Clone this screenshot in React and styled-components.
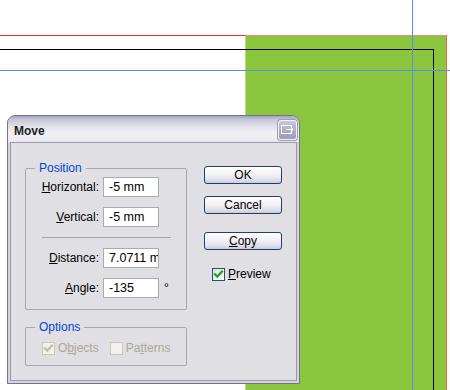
import React from "react";
import styled, { createGlobalStyle } from "styled-components";

const Global = createGlobalStyle`
  html, body { margin: 0; padding: 0; background: #ffffff; }
  body { width: 450px; height: 390px; overflow: hidden; font-family: "Liberation Sans", Arial, sans-serif; }
  * { box-sizing: border-box; }
`;

const Stage = styled.div`
  position: relative;
  width: 450px;
  height: 390px;
  overflow: hidden;
  background: #ffffff;
`;

const Artwork = styled.svg`
  display: block;
`;

const Window = styled.div`
  position: absolute;
  left: 7px;
  top: 115px;
  width: 293px;
  height: 269px;
  border: 1px solid #73738c;
  border-radius: 8px 8px 0 0;
  background: #d4d4e0;
  display: flex;
  flex-direction: column;
  font-family: "Liberation Sans", Arial, sans-serif;
  font-size: 12px;
  color: #000;
`;

const TitleBar = styled.div`
  height: 26px;
  flex: none;
  display: flex;
  align-items: center;
  justify-content: space-between;
  padding: 0 2px 0 6px;
  border-radius: 7px 7px 0 0;
  background: linear-gradient(
    to bottom,
    #a3a3ba 0%,
    #c6c6d6 14%,
    #e2e2eb 40%,
    #f1f1f5 70%,
    #e7e7ee 100%
  );
`;

const Title = styled.span`
  font-weight: bold;
  font-size: 12px;
  color: #1e1e1e;
  padding-top: 3px;
`;

const CloseButton = styled.div`
  width: 19px;
  height: 20px;
  margin-top: 2px;
  border-radius: 3px;
  border: 1px solid #f2f2f7;
  box-shadow: 0 0 0 1px #9c9cb3;
  background: linear-gradient(to bottom, #c9c9dc 0%, #acacc6 55%, #9d9db8 100%);
  display: flex;
  align-items: center;
  justify-content: center;
`;

const Body = styled.div`
  flex: 1;
  margin: 0 2px 2px 2px;
  border: 1px solid #9a9aaf;
  background: #e0dfe3;
  display: flex;
  align-items: flex-start;
  padding: 23px 0 0 14px;
  gap: 17px;
`;

const LeftColumn = styled.div`
  width: 162px;
  margin-top: 2px;
  display: flex;
  flex-direction: column;
  gap: 17px;
`;

const GroupBox = styled.div`
  position: relative;
  border: 1px solid #a9a8ad;
  border-radius: 2px;
  padding: ${(p) => p.$pad};
  display: flex;
  flex-direction: ${(p) => (p.$row ? "row" : "column")};
  gap: ${(p) => p.$gap || "10px"};
`;

const Legend = styled.span`
  position: absolute;
  top: -9px;
  left: 9px;
  padding: 0 4px;
  background: #e0dfe3;
  color: #0046d5;
  font-size: 12px;
  line-height: 16px;
`;

const FieldRow = styled.div`
  display: flex;
  align-items: center;
  height: 20px;
`;

const Label = styled.span`
  width: 73px;
  text-align: right;
  margin-right: 4px;
  white-space: nowrap;
`;

const Field = styled.div`
  width: 56px;
  height: 20px;
  border: 1px solid #a5acb2;
  background: #ffffff;
  padding: 0 0 0 5px;
  line-height: 18px;
  font-size: 12.5px;
  white-space: nowrap;
  overflow: hidden;
`;

const Unit = styled.span`
  margin-left: 5px;
  align-self: flex-start;
  padding-top: 3px;
  line-height: 14px;
`;

const Separator = styled.div`
  height: 1px;
  margin: 0 15px 0 16px;
  background: #a6a5aa;
`;

const Key = styled.span`
  text-decoration: underline;
  text-underline-offset: 1px;
`;

const CheckItem = styled.label`
  display: flex;
  align-items: center;
  gap: 3px;
  color: ${(p) => (p.$disabled ? "#aca899" : "#000")};
  white-space: nowrap;
`;

const Box = styled.span`
  width: 13px;
  height: 13px;
  flex: none;
  border: 1px solid ${(p) => (p.$disabled ? "#cac8bb" : "#1c5180")};
  background: ${(p) => (p.$disabled ? "#f2f1ea" : "linear-gradient(135deg, #dcdcd7, #ffffff)")};
  display: flex;
  align-items: center;
  justify-content: center;
`;

const RightColumn = styled.div`
  width: 78px;
  display: flex;
  flex-direction: column;
`;

const Button = styled.div`
  height: 18px;
  margin-top: ${(p) => p.$mt || "0px"};
  border: 1px solid #1f3f6d;
  border-radius: 3px;
  background: linear-gradient(to bottom, #ffffff 0%, #f3f3f7 45%, #dcdce6 85%, #cacad8 100%);
  display: flex;
  align-items: center;
  justify-content: center;
  line-height: 16px;
`;

const PreviewRow = styled.div`
  margin: 17px 0 0 8px;
`;

const Check = ({ color }) => (
  <svg width="11" height="11" viewBox="0 0 11 11">
    <path d="M2 5.2 L4.3 7.6 L9 2.6" fill="none" stroke={color} strokeWidth="2.2" strokeLinecap="square" />
  </svg>
);

const PaletteIcon = () => (
  <svg width="13" height="10" viewBox="0 0 13 10">
    <rect x="0.5" y="0.5" width="10" height="8" fill="none" stroke="#ffffff" strokeWidth="1" />
    <path d="M5 4.5 H12" stroke="#ffffff" strokeWidth="1" />
    <path d="M10 2.5 L12 4.5 L10 6.5" fill="none" stroke="#ffffff" strokeWidth="1" />
  </svg>
);

const Canvas = () => (
  <Artwork width="450" height="390" viewBox="0 0 450 390">
    <rect x="0" y="0" width="450" height="390" fill="#ffffff" />
    <rect x="245" y="35" width="201" height="355" fill="#8cc63f" />
    <rect x="245" y="36" width="1" height="354" fill="#b2d882" />
    <rect x="0" y="35" width="245" height="1" fill="#f0262b" />
    <rect x="245" y="35" width="201" height="1" fill="#ea8f87" />
    <rect x="446" y="35" width="1" height="355" fill="#ef6a2c" />
    <rect x="0" y="49" width="434" height="1" fill="#000000" />
    <rect x="433" y="49" width="1" height="341" fill="#000000" />
    <rect x="0" y="70" width="450" height="1" fill="#5a8cf6" />
    <rect x="412" y="0" width="1" height="390" fill="#5a8cf6" />
  </Artwork>
);

export default function App() {
  return (
    <Stage>
      <Global />
      <Canvas />
      <Window>
        <TitleBar>
          <Title>Move</Title>
          <CloseButton>
            <PaletteIcon />
          </CloseButton>
        </TitleBar>
        <Body>
          <LeftColumn>
            <GroupBox $pad="8px 0 11px 0" $gap="10px">
              <Legend>Position</Legend>
              <FieldRow>
                <Label><Key>H</Key>orizontal:</Label>
                <Field>-5 mm</Field>
              </FieldRow>
              <FieldRow>
                <Label><Key>V</Key>ertical:</Label>
                <Field>-5 mm</Field>
              </FieldRow>
              <Separator />
              <FieldRow>
                <Label><Key>D</Key>istance:</Label>
                <Field>7.0711 mm</Field>
              </FieldRow>
              <FieldRow>
                <Label><Key>A</Key>ngle:</Label>
                <Field>-135</Field>
                <Unit>°</Unit>
              </FieldRow>
            </GroupBox>
            <GroupBox $row $pad="13px 0 10px 16px" $gap="11px">
              <Legend>Options</Legend>
              <CheckItem $disabled>
                <Box $disabled>
                  <Check color="#bdbcb0" />
                </Box>
                <span>O<Key>b</Key>jects</span>
              </CheckItem>
              <CheckItem $disabled>
                <Box $disabled />
                <span>Pa<Key>t</Key>terns</span>
              </CheckItem>
            </GroupBox>
          </LeftColumn>
          <RightColumn>
            <Button>OK</Button>
            <Button $mt="12px">Cancel</Button>
            <Button $mt="18px"><span><Key>C</Key>opy</span></Button>
            <PreviewRow>
              <CheckItem>
                <Box>
                  <Check color="#21a121" />
                </Box>
                <span><Key>P</Key>review</span>
              </CheckItem>
            </PreviewRow>
          </RightColumn>
        </Body>
      </Window>
    </Stage>
  );
}
